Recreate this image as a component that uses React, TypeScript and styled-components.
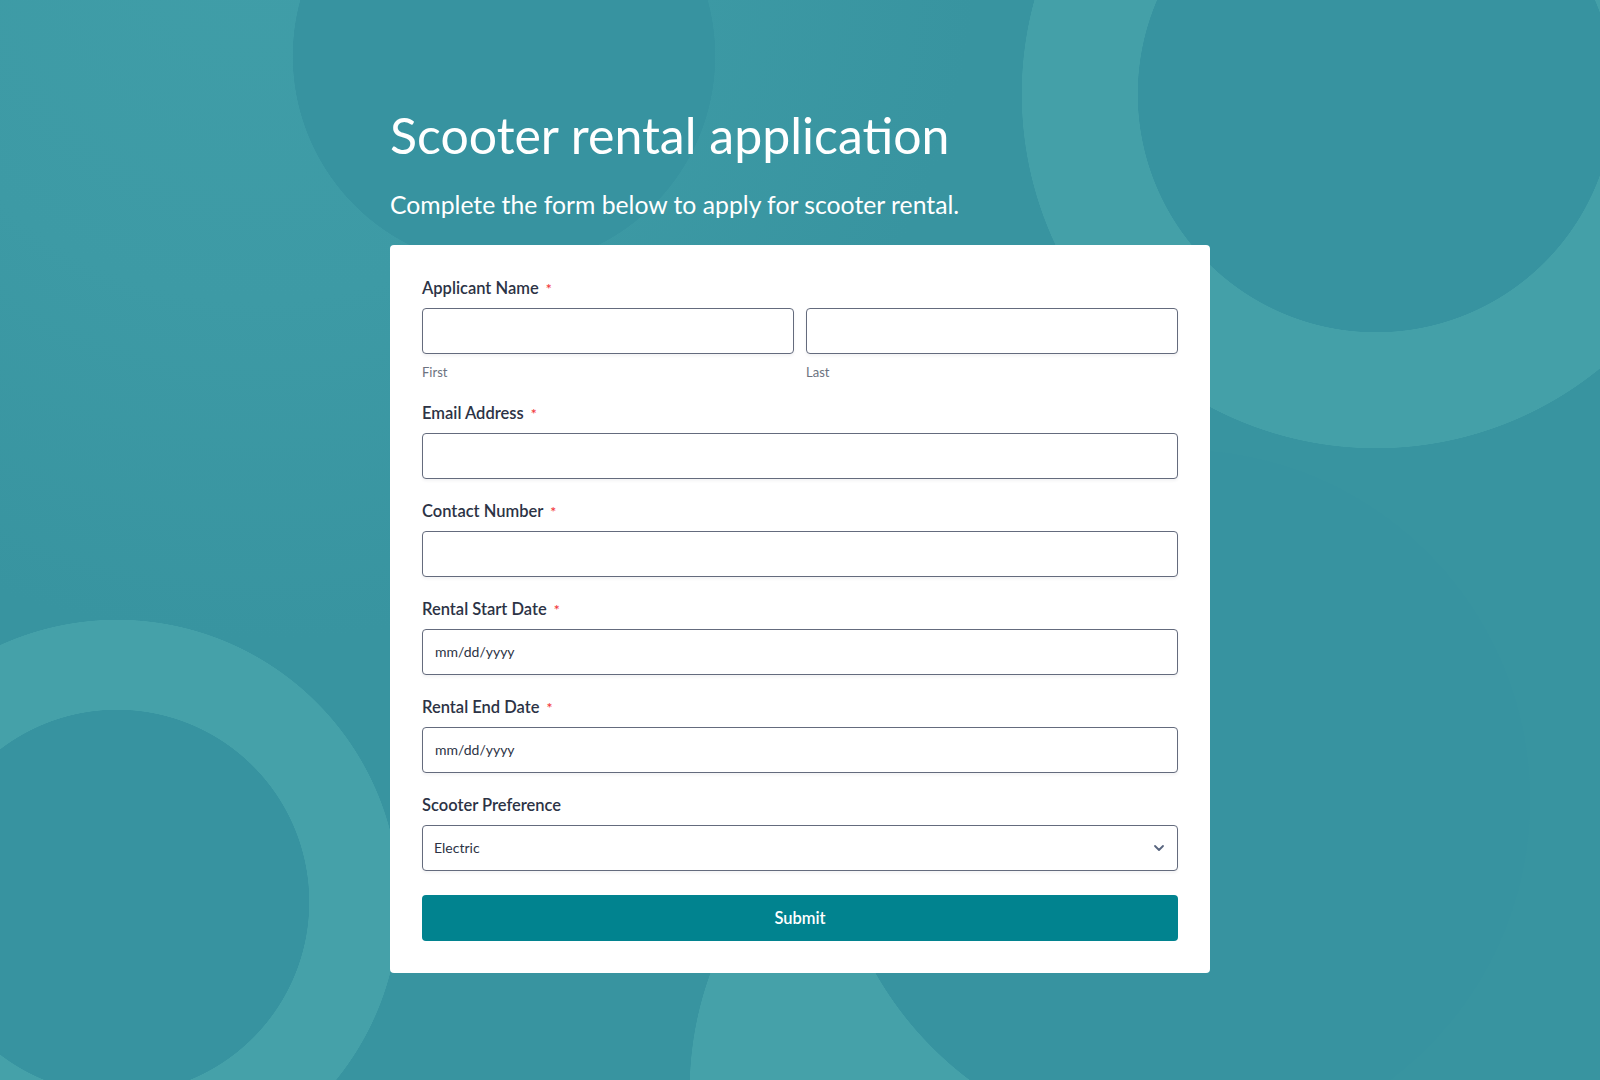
import styled, { createGlobalStyle } from "styled-components";

const GlobalStyle = createGlobalStyle`
  * { box-sizing: border-box; }
  body {
    margin: 0;
    font-family: Lato, "Noto Sans", "Liberation Sans", sans-serif;
  }
`;

const dark = "#3793a0";
const light = "#45a1a9";

const Page = styled.div`
  min-height: 1080px;
  width: 100%;
  padding: 105px 0 80px;
  background:
    radial-gradient(circle at 1376px 94px, ${dark} 0 238px, #44a0a8 238.5px 354px, transparent 354.5px),
    radial-gradient(circle at 117px 902px, ${dark} 0 192px, ${light} 192.5px 282px, transparent 282.5px),
    radial-gradient(circle at 1180px 800px, ${dark} 0 350px, transparent 350.5px),
    radial-gradient(circle at 1030px 1090px, ${light} 0 340px, transparent 340.5px),
    radial-gradient(circle at 504px 56px, ${dark} 0 211px, transparent 211.5px),
    radial-gradient(circle at 260px -80px, #409ea8 0, #3d9aa5 380px, #3894a0 720px);
`;

const Wrapper = styled.div`
  width: 820px;
  margin: 0 auto;
`;

const Title = styled.h1`
  margin: 0;
  font-size: 50px;
  line-height: 1.2;
  font-weight: 400;
  color: #ffffff;
`;

const Subtitle = styled.p`
  margin: 25px 0 25px;
  font-size: 24.75px;
  line-height: 1.2;
  font-weight: 400;
  color: #ffffff;
`;

const Card = styled.form`
  background: #ffffff;
  border-radius: 4px;
  padding: 32px;
  display: flex;
  flex-direction: column;
  gap: 21px;
`;

const Field = styled.div<{ $extra?: number }>`
  display: flex;
  flex-direction: column;
  margin-bottom: ${(p) => p.$extra ?? 0}px;
`;

const Label = styled.label`
  font-size: 16.5px;
  line-height: 22px;
  font-weight: 600;
  color: #2c3345;
  margin-bottom: 9px;
`;

const Required = styled.span`
  color: #f23a3c;
  font-size: 14px;
  line-height: 0;
  margin-left: 7px;
`;

const Row = styled.div`
  display: grid;
  grid-template-columns: 1fr 1fr;
  gap: 12px;
`;

const SubField = styled.div`
  display: flex;
  flex-direction: column;
`;

const SubLabel = styled.span`
  margin-top: 10px;
  font-size: 13px;
  line-height: 16px;
  color: #6c7280;
`;

const Input = styled.input`
  width: 100%;
  height: 46px;
  padding: 0 12px;
  border: 1px solid #646b7d;
  border-radius: 4px;
  background: #ffffff;
  box-shadow: 0 2px 3px rgba(44, 51, 69, 0.06);
  font-family: inherit;
  font-size: 14px;
  color: #2c3345;
  outline: none;

  &::placeholder {
    color: #2c3345;
    opacity: 1;
  }
`;

const SelectWrap = styled.div`
  position: relative;
`;

const Select = styled.select`
  width: 100%;
  height: 46px;
  padding: 0 36px 0 11px;
  border: 1px solid #646b7d;
  border-radius: 4px;
  background: #ffffff;
  box-shadow: 0 2px 3px rgba(44, 51, 69, 0.06);
  font-family: inherit;
  font-size: 14px;
  color: #2c3345;
  appearance: none;
  outline: none;
`;

const Chevron = styled.svg`
  position: absolute;
  right: 13px;
  top: 50%;
  margin-top: -5px;
  width: 12px;
  height: 10px;
  pointer-events: none;
`;

const Submit = styled.button`
  margin-top: 3px;
  height: 46px;
  border: none;
  border-radius: 4px;
  background: #01838f;
  color: #ffffff;
  font-family: inherit;
  font-size: 16.5px;
  font-weight: 600;
  cursor: pointer;
`;

function App() {
  return (
    <Page>
      <GlobalStyle />
      <Wrapper>
        <Title>Scooter rental application</Title>
        <Subtitle>Complete the form below to apply for scooter rental.</Subtitle>
        <Card onSubmit={(e) => e.preventDefault()}>
          <Field $extra={1}>
            <Label>
              Applicant Name<Required>*</Required>
            </Label>
            <Row>
              <SubField>
                <Input type="text" />
                <SubLabel>First</SubLabel>
              </SubField>
              <SubField>
                <Input type="text" />
                <SubLabel>Last</SubLabel>
              </SubField>
            </Row>
          </Field>
          <Field>
            <Label>
              Email Address<Required>*</Required>
            </Label>
            <Input type="email" />
          </Field>
          <Field>
            <Label>
              Contact Number<Required>*</Required>
            </Label>
            <Input type="tel" />
          </Field>
          <Field>
            <Label>
              Rental Start Date<Required>*</Required>
            </Label>
            <Input type="text" placeholder="mm/dd/yyyy" />
          </Field>
          <Field>
            <Label>
              Rental End Date<Required>*</Required>
            </Label>
            <Input type="text" placeholder="mm/dd/yyyy" />
          </Field>
          <Field>
            <Label>Scooter Preference</Label>
            <SelectWrap>
              <Select defaultValue="Electric">
                <option>Electric</option>
                <option>Kick</option>
                <option>Gas</option>
              </Select>
              <Chevron viewBox="0 0 12 10">
                <path d="M2 3l4 4 4-4" fill="none" stroke="#57647e" strokeWidth="1.8" strokeLinecap="round" strokeLinejoin="round" />
              </Chevron>
            </SelectWrap>
          </Field>
          <Submit type="submit">Submit</Submit>
        </Card>
      </Wrapper>
    </Page>
  );
}

export default App;
